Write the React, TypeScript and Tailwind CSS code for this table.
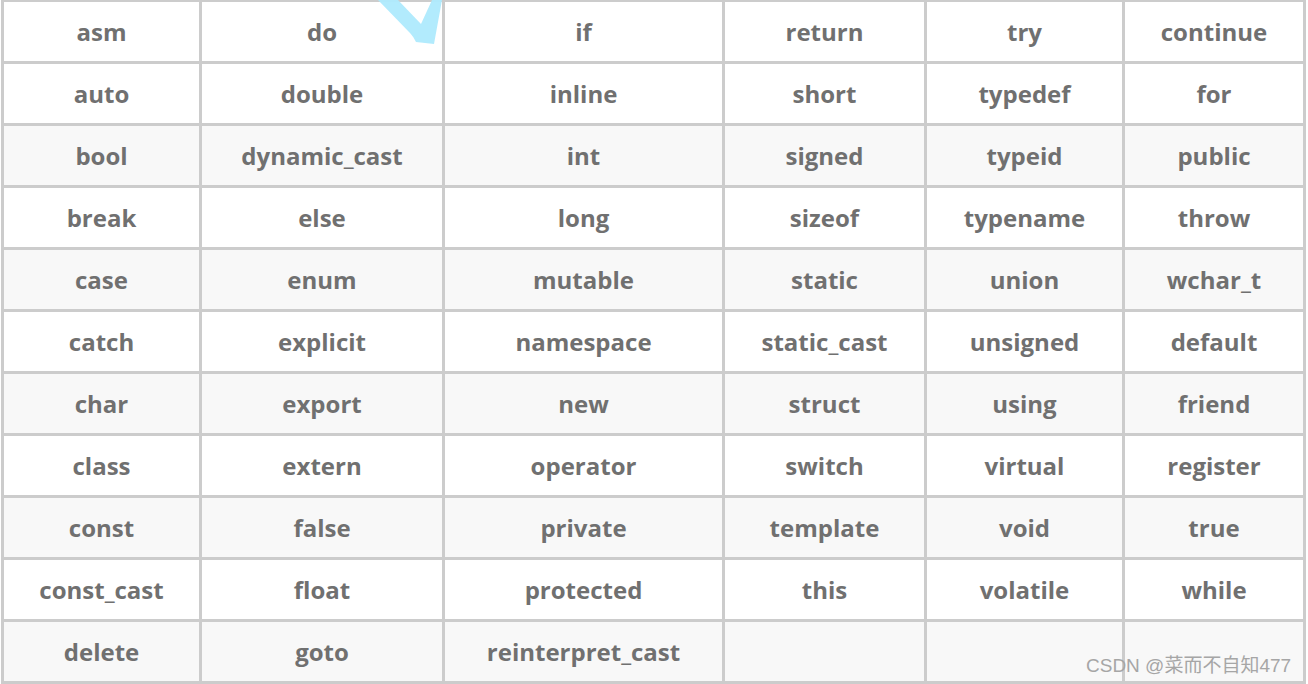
import React from "react";

const rows: string[][] = [
  ["asm", "do", "if", "return", "try", "continue"],
  ["auto", "double", "inline", "short", "typedef", "for"],
  ["bool", "dynamic_cast", "int", "signed", "typeid", "public"],
  ["break", "else", "long", "sizeof", "typename", "throw"],
  ["case", "enum", "mutable", "static", "union", "wchar_t"],
  ["catch", "explicit", "namespace", "static_cast", "unsigned", "default"],
  ["char", "export", "new", "struct", "using", "friend"],
  ["class", "extern", "operator", "switch", "virtual", "register"],
  ["const", "false", "private", "template", "void", "true"],
  ["const_cast", "float", "protected", "this", "volatile", "while"],
  ["delete", "goto", "reinterpret_cast", "", "", ""],
];

export default function App() {
  return (
    <div className="relative w-[1308px] h-[684px] bg-white overflow-hidden">
      <div
        className="ml-[1px] w-[1305px] grid grid-cols-[195px_240px_277px_199px_195px_178px] auto-rows-[59px] gap-[3px] bg-[#cccccc] pt-[2px] px-[3px] pb-[3px]"
        style={{ fontFamily: '"Open Sans", "Noto Sans", sans-serif' }}
      >
        {rows.map((row, i) =>
          row.map((word, j) => (
            <div
              key={i + "-" + j}
              className={
                "flex items-center justify-center text-[24px] font-bold text-[#707070] " +
                (i > 0 && i % 2 === 0 ? "bg-[#f8f8f8]" : "bg-white")
              }
            >
              {word}
            </div>
          ))
        )}
      </div>

      {/* cyan bit of the site watermark */}
      <svg
        className="absolute left-0 top-0 pointer-events-none"
        width="1308"
        height="60"
        viewBox="0 0 1308 60"
      >
        <path
          d="M378 0 L398 0 L421 24 L432 0 L442 0 L434 44 L416 42 Q413 36 410 33 Z"
          fill="#aeeafd"
          opacity="0.95"
        />
      </svg>

      <div
        className="absolute left-[1086px] top-[652px] text-[19px] text-[#a6a6a6] pointer-events-none"
        style={{ fontFamily: '"Liberation Sans", "Noto Sans CJK SC", sans-serif' }}
      >
        CSDN @菜而不自知477
      </div>
    </div>
  );
}
